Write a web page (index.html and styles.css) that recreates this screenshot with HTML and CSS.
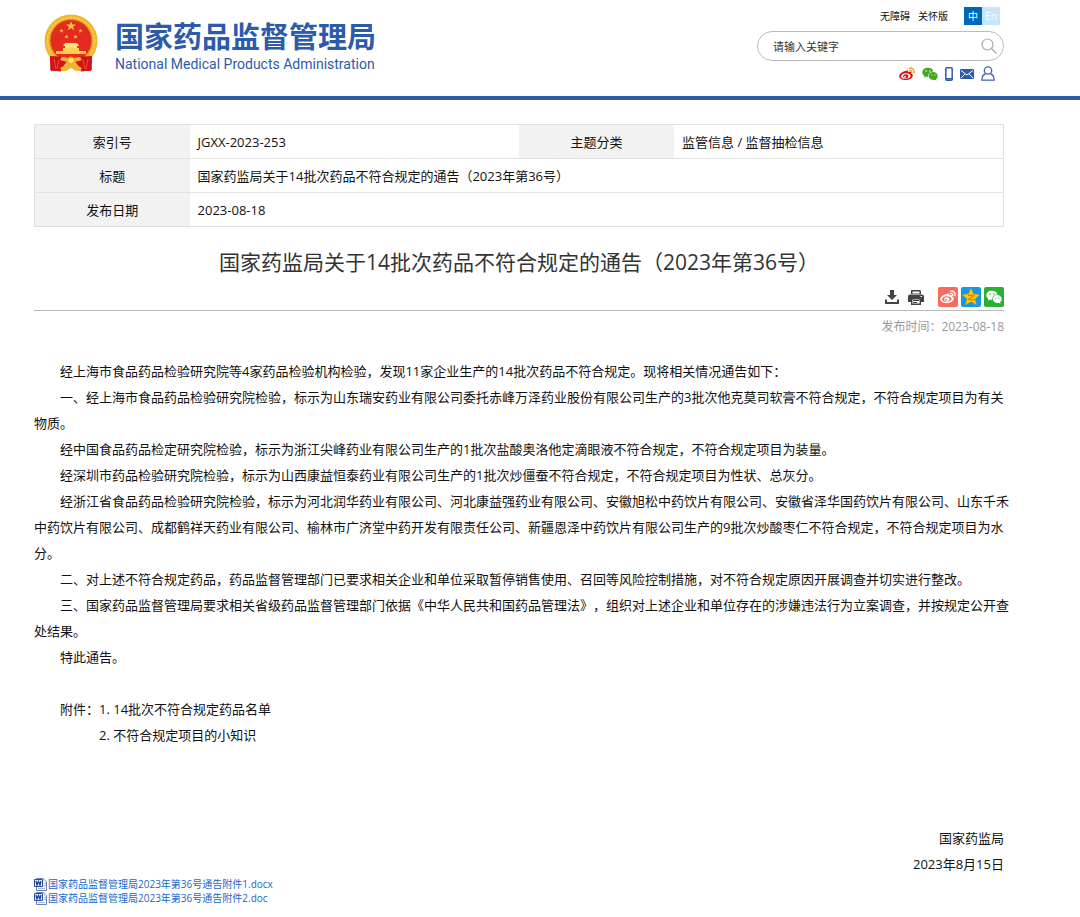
FILE: index.html
```html
<!DOCTYPE html>
<html lang="zh-CN">
<head>
  <meta charset="UTF-8">
  <meta name="viewport" content="width=device-width, initial-scale=1.0">
  <title>国家药监局关于14批次药品不符合规定的通告（2023年第36号）</title>
  <link rel="stylesheet" href="styles.css">
</head>
<body>
  <!-- shared icon shapes -->
  <svg class="sprite" aria-hidden="true">
    <symbol id="wechat" viewBox="0 0 16 14">
      <path d="M6 .7C2.8.7.3 2.7.3 5.300c0 1.500.8 2.700 2.100 3.600l-.6 1.900 2.200-1.200c.7.2 1.300.3 2 .3h.4C5.800 6.800 8.100 4.500 11.500 4.500 11 2.300 8.800.7 6 .7z"/>
      <path d="M15.700 9c0-2.200-2.100-3.900-4.500-3.900S6.800 6.800 6.800 9s1.900 3.900 4.400 3.900c.6 0 1.100-.1 1.600-.2l1.700 1-.4-1.600c1-.7 1.600-1.800 1.600-3.100z"/>
      <g class="eyes"><circle cx="4.200" cy="4" r=".8"/><circle cx="7.900" cy="4" r=".8"/><circle cx="9.800" cy="8" r=".6"/><circle cx="12.700" cy="8" r=".6"/></g>
    </symbol>
    <symbol id="weibo-eye" viewBox="0 0 16 14">
      <path fill-rule="evenodd" d="M6.200 4C7.600 3.300 9 3.300 9.200 4.100c.1.400 0 .8-.1 1.100 1.500-.6 3-.5 3.100.5.100.4-.1.800-.1.900 1 .3 1.700.9 1.700 1.900 0 2.500-3.300 4.600-7 4.600C3 13.100.2 11.400.2 9 .2 7 3.500 4.500 6.200 4zM6.700 6.200C4.100 6.400 2 7.800 2.100 9.400c.1 1.600 2.300 2.700 4.900 2.500 2.600-.2 4.700-1.700 4.600-3.300-.2-1.600-2.300-2.600-4.900-2.400z"/>
      <path fill-rule="evenodd" d="M6.700 7.200c1.500-.2 2.700.6 2.800 1.800.1 1.200-1 2.300-2.500 2.500-1.500.1-2.800-.7-2.900-1.900-.1-1.200 1.100-2.300 2.600-2.400zM6 8.900c-.7.100-1.200.5-1.100 1 .1.500.6.800 1.200.700.7-.1 1.100-.6 1-1.100-.1-.4-.5-.7-1.100-.6z"/>
    </symbol>
    <symbol id="weibo-wave" viewBox="0 0 16 14">
      <path fill="none" stroke="currentColor" stroke-width="1.400" stroke-linecap="round" d="M10.400 1.100c2.900-.6 5.200 1.600 4.700 4.600M10.700 3.400c1.300-.2 2.300.8 2 2"/>
    </symbol>
    <symbol id="word" viewBox="0 0 13 13">
      <path fill="#f2f6fd" stroke="#6d83b5" d="M2.500.5h7l3 3v9h-10z"/>
      <path fill="#c9d5ee" d="M9.500.5l3 3h-3z"/>
      <path stroke="#a9b9dc" d="M10 5.500h2M10 7.500h2M4 10.500h7"/>
      <path fill="#e8effb" stroke="#2a50a5" d="M.5 1.500h8v7h-8z"/>
      <path fill="none" stroke="#1d3f96" stroke-width="1.300" d="M2 3l1 4 1.500-3.500L6 7l1-4"/>
    </symbol>
  </svg>

  <header class="header">
    <a class="logo" href="#">
      <svg class="emblem" viewBox="0 0 54 58" role="img" aria-label="国徽">
        <path fill="#d71918" d="M7 40h40l1 9-1 8-10-1-5-3H22l-5 3-10 1-1-8z"/>
        <circle cx="27" cy="27" r="26.500" fill="#f0b52e"/>
        <circle cx="27" cy="27" r="23.500" fill="none" stroke="#f9cb4a" stroke-width="2" stroke-dasharray="3 1"/>
        <circle cx="27" cy="26.500" r="21" fill="#e52a20" stroke="#d99518"/>
        <path fill="#f8c93c" d="M27 7l1.200 3.500H32l-3 2.200 1.100 3.600L27 14.100l-3.100 2.200 1.100-3.600-3-2.200h3.800z"/>
        <g fill="#f3b634">
          <path id="star" d="M17.500 14.500l.6 1.600h1.700l-1.300 1 .4 1.700-1.400-1-1.400 1 .4-1.700-1.300-1h1.700z"/>
          <use href="#star" x="19"/><use href="#star" x="5" y="6"/><use href="#star" x="14" y="6"/>
        </g>
        <path fill="#ffe07a" d="M19.500 30.500l2-1.500h11l2 1.500v1.500h-15zM21 32h12v2H21z"/>
        <path fill="#fbd258" d="M19 34h16v3H19z"/>
        <path fill="#f9cc50" d="M12 37h30v3H12z"/>
        <path fill="#cf1518" d="M6 42l10 .5 8 4-5 6-2 5-9-1-2-1 1-5-1-4zM48 42l-10 .5-8 4 5 6 2 5 9-1 2-1-1-5 1-4z"/>
        <path fill="none" stroke="#ef4a35" d="M10 45l2 10M15 46l-2 9M44 45l-2 10M39 46l2 9"/>
        <path fill="#f0b232" d="M18 43q5 0 9 3 4-3 9-3l2 3-7 2-1 2 8 4-2 3h-4l-5-3-5 3h-4l-2-3 8-4-1-2-7-2z"/>
        <circle cx="27" cy="46.500" r="3.500" fill="#ffdc64" stroke="#e39a20"/>
      </svg>
      <span class="logo-text">
        <strong>国家药品监督管理局</strong>
        <span>National Medical Products Administration</span>
      </span>
    </a>

    <div class="header-tools">
      <div class="top-links">
        <a href="#">无障碍</a>
        <a href="#">关怀版</a>
        <span class="lang"><a class="active" href="#">中</a><a href="#">En</a></span>
      </div>
      <form class="search">
        <input type="text" placeholder="请输入关键字" aria-label="请输入关键字">
        <button type="button" aria-label="搜索">
          <svg width="16" height="16" viewBox="0 0 16 16" fill="none" stroke="#aaa" stroke-width="1.200"><circle cx="6.500" cy="6.500" r="5.500"/><path d="M10.500 10.500l5 5"/></svg>
        </button>
      </form>
      <div class="social">
        <a href="#" aria-label="微博"><svg width="16" height="14"><use href="#weibo-eye" fill="#dc1018"/><use href="#weibo-wave" color="#f5a316"/></svg></a>
        <a href="#" aria-label="微信"><svg class="green" width="16" height="14"><use href="#wechat"/></svg></a>
        <a href="#" aria-label="手机版"><svg width="8" height="14" viewBox="0 0 8 14"><rect x=".8" y=".8" width="6.400" height="12.400" rx="1" fill="#fff" stroke="#2c5bab" stroke-width="1.500"/><path stroke="#2c5bab" stroke-width="1.500" d="M1 11.800h6"/></svg></a>
        <a href="#" aria-label="邮箱"><svg width="14" height="10" viewBox="0 0 14 10"><rect width="14" height="10" rx="1" fill="#2c5bab"/><path fill="none" stroke="#fff" d="M1 1.500l6 4.500 6-4.500M1 9l4-4M13 9L9 5"/></svg></a>
        <a href="#" aria-label="个人中心"><svg width="14" height="15" viewBox="0 0 14 15" fill="none" stroke="#4560b4" stroke-width="1.300"><circle cx="7" cy="4.500" r="3.700"/><path d="M4.500 8C2 8.600.8 10.500.8 14.200h12.400C13.200 10.500 12 8.600 9.500 8"/></svg></a>
      </div>
    </div>
  </header>

  <main class="container">
    <table class="info">
      <tr>
        <th scope="row">索引号</th>
        <td>JGXX-2023-253</td>
        <th scope="row">主题分类</th>
        <td>监管信息 / 监督抽检信息</td>
      </tr>
      <tr>
        <th scope="row">标题</th>
        <td colspan="3">国家药监局关于14批次药品不符合规定的通告（2023年第36号）</td>
      </tr>
      <tr>
        <th scope="row">发布日期</th>
        <td colspan="3">2023-08-18</td>
      </tr>
    </table>

    <h1>国家药监局关于14批次药品不符合规定的通告（2023年第36号）</h1>

    <div class="tools">
      <button type="button" aria-label="下载"><svg width="16" height="16" viewBox="0 0 16 16" fill="#444"><path d="M6 1h4v5h3l-5 5-5-5h3z"/><path d="M1 10.500V15h14v-4.500h-2V13H3v-2.500z"/></svg></button>
      <button type="button" aria-label="打印"><svg width="16" height="16" viewBox="0 0 16 16"><path fill="#444" d="M3 1h9l1 1v3H3zM2 5.500h12q2 0 2 2V13h-3v-3H3v3H0V7.500q0-2 2-2z"/><path fill="#fff" d="M4.500 2.500h7v2h-7zM12.500 7H14v1h-1.500z"/><path fill="#fff" stroke="#444" stroke-width="1.400" d="M3.700 9.700h8.600v5.600H3.700z"/><path stroke="#444" d="M5 11.500h6M5 13.500h4"/></svg></button>
      <div class="share">
        <a class="share-weibo" href="#" aria-label="分享到微博"><svg width="16" height="14"><use href="#weibo-eye"/><use href="#weibo-wave"/></svg></a>
        <a class="share-qzone" href="#" aria-label="分享到QQ空间"><svg width="18" height="18" viewBox="0 0 18 18"><path fill="#ffce00" stroke="#ee9b00" stroke-width=".5" d="M9 .5l2.500 5.600 6 .6-4.500 4 1.300 6L9 13.600l-5.300 3.100 1.300-6-4.500-4 6-.6z"/><path fill="none" stroke="#e37a00" stroke-width="1.300" d="M6 7.500q4-.8 6 0l-5.500 4q3 .9 6.500 0"/></svg></a>
        <a class="share-wechat" href="#" aria-label="分享到微信"><svg width="16" height="14"><use href="#wechat"/></svg></a>
      </div>
    </div>
    <p class="date">发布时间：2023-08-18</p>

    <article class="content">
      <p>经上海市食品药品检验研究院等4家药品检验机构检验，发现11家企业生产的14批次药品不符合规定。现将相关情况通告如下：</p>
      <p>一、经上海市食品药品检验研究院检验，标示为山东瑞安药业有限公司委托赤峰万泽药业股份有限公司生产的3批次他克莫司软膏不符合规定，不符合规定项目为有关物质。</p>
      <p>经中国食品药品检定研究院检验，标示为浙江尖峰药业有限公司生产的1批次盐酸奥洛他定滴眼液不符合规定，不符合规定项目为装量。</p>
      <p>经深圳市药品检验研究院检验，标示为山西康益恒泰药业有限公司生产的1批次炒僵蚕不符合规定，不符合规定项目为性状、总灰分。</p>
      <p>经浙江省食品药品检验研究院检验，标示为河北润华药业有限公司、河北康益强药业有限公司、安徽旭松中药饮片有限公司、安徽省泽华国药饮片有限公司、山东千禾中药饮片有限公司、成都鹤祥天药业有限公司、榆林市广济堂中药开发有限责任公司、新疆恩泽中药饮片有限公司生产的9批次炒酸枣仁不符合规定，不符合规定项目为水分。</p>
      <p>二、对上述不符合规定药品，药品监督管理部门已要求相关企业和单位采取暂停销售使用、召回等风险控制措施，对不符合规定原因开展调查并切实进行整改。</p>
      <p>三、国家药品监督管理局要求相关省级药品监督管理部门依据《中华人民共和国药品管理法》，组织对上述企业和单位存在的涉嫌违法行为立案调查，并按规定公开查处结果。</p>
      <p>特此通告。</p>
      <div class="attach">
        <p>附件：1. 14批次不符合规定药品名单</p>
        <p class="second">2. 不符合规定项目的小知识</p>
      </div>
    </article>

    <div class="sign">
      <p>国家药监局</p>
      <p>2023年8月15日</p>
    </div>

    <div class="files">
      <a href="#"><svg width="13" height="13"><use href="#word"/></svg>国家药品监督管理局2023年第36号通告附件1.docx</a>
      <a href="#"><svg width="13" height="13"><use href="#word"/></svg>国家药品监督管理局2023年第36号通告附件2.doc</a>
    </div>
  </main>
</body>
</html>
```
FILE: styles.css
```css
* {
  box-sizing: border-box;
}
body {
  margin: 0;
  background: #fff;
  color: #111;
  font-family: "Open Sans", "Noto Sans CJK SC", sans-serif;
  font-size: 13px;
  line-height: 26px;
  text-spacing-trim: space-all;
}
p {
  margin: 0;
}
a {
  color: inherit;
  text-decoration: none;
}
svg {
  display: block;
}
button {
  padding: 0;
  border: none;
  background: none;
  cursor: pointer;
}
.sprite {
  position: absolute;
  width: 0;
  height: 0;
}

/* header */
.header {
  display: flex;
  justify-content: space-between;
  padding: 7px 76px 15px 44px;
  border-bottom: 4px solid #2c5bab;
}
.logo {
  display: flex;
  gap: 17px;
  padding-top: 7px;
  color: #2c5bab;
}
.emblem {
  width: 54px;
  height: 58px;
}
.logo-text {
  display: flex;
  flex-direction: column;
  padding: 6px 0 5px;
}
.logo-text strong {
  font-size: 29px;
  line-height: 34px;
}
.logo-text span {
  font-family: Roboto, sans-serif;
  font-size: 14px;
  line-height: 20px;
}
.header-tools {
  width: 247px;
}
.top-links {
  display: flex;
  justify-content: flex-end;
  gap: 8px;
  padding-right: 4px;
  font-size: 10px;
  line-height: 18px;
}
.lang {
  display: flex;
  margin-left: 8px;
}
.lang a {
  width: 18px;
  background: #c5e6ff;
  color: #fff;
  text-align: center;
}
.lang .active {
  background: #0068b7;
}
.search {
  display: flex;
  align-items: center;
  height: 30px;
  margin-top: 6px;
  padding: 0 6px 0 15px;
  border: 1px solid #bbb;
  border-radius: 15px;
}
.search input {
  flex: 1;
  min-width: 0;
  padding: 0;
  border: none;
  outline: none;
  background: none;
  font-family: inherit;
  font-size: 11px;
}
.search input::placeholder {
  color: #333;
  opacity: 1;
}
.social {
  display: flex;
  justify-content: flex-end;
  align-items: center;
  gap: 7px;
  height: 15px;
  margin-top: 5px;
  padding-right: 9px;
}
.green {
  fill: #45a51d;
}
.eyes {
  fill: var(--eye, #fff);
}

/* document info */
.container {
  padding: 24px 76px 0 34px;
}
.info {
  width: 100%;
  border: 1px solid #ddd;
  border-collapse: collapse;
  table-layout: fixed;
}
.info th,
.info td {
  height: 34px;
  padding: 0 8px;
  border-top: 1px solid #e2e2e2;
}
.info th {
  width: 16%;
  background: #f2f2f2;
  font-weight: normal;
  text-align: center;
}
h1 {
  margin: 20px 0 10px;
  color: #333;
  font-size: 21px;
  font-weight: normal;
  line-height: 30px;
  text-align: center;
}
.tools {
  display: flex;
  justify-content: flex-end;
  align-items: center;
  gap: 8px;
  padding-bottom: 3px;
  border-bottom: 1px solid #bbb;
}
.share {
  display: flex;
  gap: 3px;
  margin-left: 6px;
}
.share a {
  display: flex;
  align-items: center;
  justify-content: center;
  width: 20px;
  height: 20px;
  border-radius: 2px;
  color: #fff;
  fill: #fff;
}
.share-weibo {
  background: #f56c5e;
}
.share-qzone {
  background: #1498ea;
}
.share-wechat {
  --eye: #2bb034;
  background: #2bb034;
}
.date {
  padding-top: 3px;
  color: #999;
  font-size: 12px;
  text-align: right;
}

/* notice text */
.content {
  margin: 18px -6px 0 0;
  text-indent: 2em;
}
.attach {
  margin-top: 26px;
}
.attach .second {
  text-indent: 5em;
}
.sign {
  margin-top: 77px;
  text-align: right;
}
.files {
  display: flex;
  flex-direction: column;
  align-items: flex-start;
  color: #1468cc;
  font-size: 10px;
  line-height: 14px;
}
.files a {
  display: flex;
  align-items: center;
  gap: 1px;
}
```
